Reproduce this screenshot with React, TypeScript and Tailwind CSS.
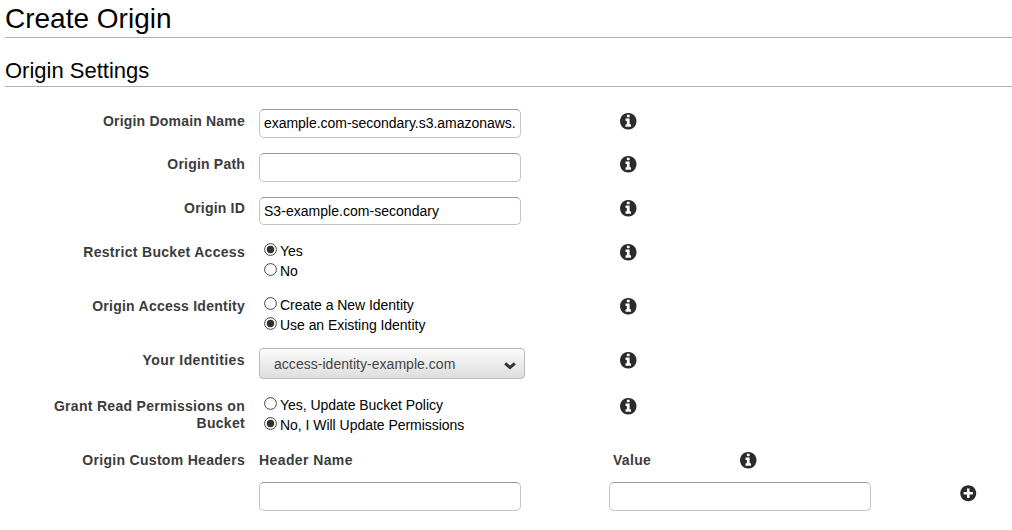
import { useState, type ReactNode } from "react";
import { FaPlusCircle } from "react-icons/fa";

const inputClass =
  "block w-[262px] rounded-[5px] border border-[#c4c4c4] border-t-[#999] bg-white pr-1 pl-1 text-[14px] text-black outline-none";

function Info() {
  return (
    <svg width="16.5" height="16.5" viewBox="128 128 1536 1536" fill="#2b2b2e" className="shrink-0">
      <path d="M1152 1376v-160q0-14-9-23t-23-9h-96v-512q0-14-9-23t-23-9h-320q-14 0-23 9t-9 23v160q0 14 9 23t23 9h96v320h-96q-14 0-23 9t-9 23v160q0 14 9 23t23 9h448q14 0 23-9t9-23zm-128-896v-160q0-14-9-23t-23-9h-192q-14 0-23 9t-9 23v160q0 14 9 23t23 9h192q14 0 23-9t9-23zm640 416q0 209-103 385.5t-279.5 279.5-385.5 103-385.5-103-279.5-279.5-103-385.5 103-385.5 279.5-279.5 385.5-103 385.5 103 279.5 279.5 103 385.5z" />
    </svg>
  );
}

function Row({
  label,
  height,
  pad = "pt-[3px]",
  tracking = "tracking-[0.2px]",
  children,
}: {
  label: string;
  height: string;
  pad?: string;
  tracking?: string;
  children: ReactNode;
}) {
  return (
    <div className={"flex items-start " + height}>
      <div
        className={
          "w-[245px] shrink-0 pl-10 text-right text-[14px] leading-[17px] font-bold text-[#3c3c3c] " +
          pad +
          " " +
          tracking
        }
      >
        {label}
      </div>
      <div className="ml-[14px] w-[361px] shrink-0">{children}</div>
      <div className={pad}>
        <Info />
      </div>
    </div>
  );
}

function Radios({ options, initial, tracking = "" }: { options: string[]; initial: number; tracking?: string }) {
  const [selected, setSelected] = useState(initial);
  return (
    <div className="flex flex-col pl-[5px]" role="radiogroup">
      {options.map((option, i) => (
        <button
          key={option}
          type="button"
          role="radio"
          aria-checked={selected === i}
          onClick={() => setSelected(i)}
          className={"flex h-5 items-start text-left text-[14px] leading-5 text-black " + tracking}
        >
          <svg width="13" height="13" viewBox="0 0 13 13" className="mt-[2px] mr-[3px] shrink-0">
            <circle cx="6.5" cy="6.5" r="5.9" fill="#fff" stroke="#444" strokeWidth="1" />
            {selected === i && <circle cx="6.5" cy="6.5" r="3.7" fill="#303030" />}
          </svg>
          <span>{option}</span>
        </button>
      ))}
    </div>
  );
}

export default function App() {
  return (
    <main className="h-[530px] w-[1012px] overflow-hidden bg-white pl-[5px] font-['Liberation_Sans',Arial,sans-serif]">
      <h1 className="h-[38px] border-b border-[#b0b0b0] pt-[3px] text-[28px] leading-8 text-black">Create Origin</h1>
      <h2 className="h-[49px] border-b border-[#b0b0b0] pt-5 text-[22px] leading-[26px] text-black">
        Origin Settings
      </h2>
      <form className="-ml-[5px] pt-[22px]">
        <Row label="Origin Domain Name" height="h-11" pad="pt-1">
          <input
            className={inputClass + " h-[29px] pb-[2px] tracking-[-0.03px]"}
            defaultValue="example.com-secondary.s3.amazonaws."
          />
        </Row>
        <Row label="Origin Path" height="h-11">
          <input className={inputClass + " h-[29px]"} />
        </Row>
        <Row label="Origin ID" height="h-[44px]">
          <input className={inputClass + " h-[28px] tracking-[0.03px]"} defaultValue="S3-example.com-secondary" />
        </Row>
        <Row label="Restrict Bucket Access" height="h-[54px]" tracking="tracking-[0.3px]">
          <Radios options={["Yes", "No"]} initial={0} />
        </Row>
        <Row label="Origin Access Identity" height="h-[53px]" tracking="tracking-[0.25px]">
          <Radios
            options={["Create a New Identity", "Use an Existing Identity"]}
            initial={1}
            tracking="tracking-[-0.04px]"
          />
        </Row>
        <Row label="Your Identities" height="h-[47px]" pad="pt-1" tracking="tracking-[0.42px]">
          <button
            type="button"
            className="flex h-[31px] w-[266px] items-center justify-between rounded-[4px] border border-[#bababa] bg-linear-to-b from-[#fbfbfb] to-[#dedede] pr-2 pl-[14px] text-[14px] text-[#444]"
          >
            <span className="pt-[2px] tracking-[0.03px]">access-identity-example.com</span>
            <svg
              width="12"
              height="8"
              viewBox="0 0 12 8"
              className="mt-[4px]"
              fill="none"
              stroke="#333"
              strokeWidth="3"
            >
              <path d="M1.2 1.3 6 5.6 10.8 1.3" />
            </svg>
          </button>
        </Row>
        <Row label="Grant Read Permissions on Bucket" height="h-[57px]" tracking="tracking-[0.3px]">
          <Radios
            options={["Yes, Update Bucket Policy", "No, I Will Update Permissions"]}
            initial={1}
            tracking="tracking-[-0.03px]"
          />
        </Row>
        <div className="flex h-[30px] items-start text-[14px] leading-[17px] font-bold tracking-[0.3px] text-[#3c3c3c]">
          <div className="w-[245px] text-right">Origin Custom Headers</div>
          <div className="ml-[14px] w-[354px] tracking-[0.4px]">Header Name</div>
          <div className="w-[127px]">Value</div>
          <Info />
        </div>
        <div className="flex items-start pl-[259px]">
          <input className={inputClass + " h-[29px]"} />
          <input className={inputClass + " ml-[88px] h-[29px]"} />
          <button type="button" className="mt-[3px] ml-[89px] text-[#2b2b2e]">
            <FaPlusCircle size={16.5} />
          </button>
        </div>
      </form>
    </main>
  );
}
